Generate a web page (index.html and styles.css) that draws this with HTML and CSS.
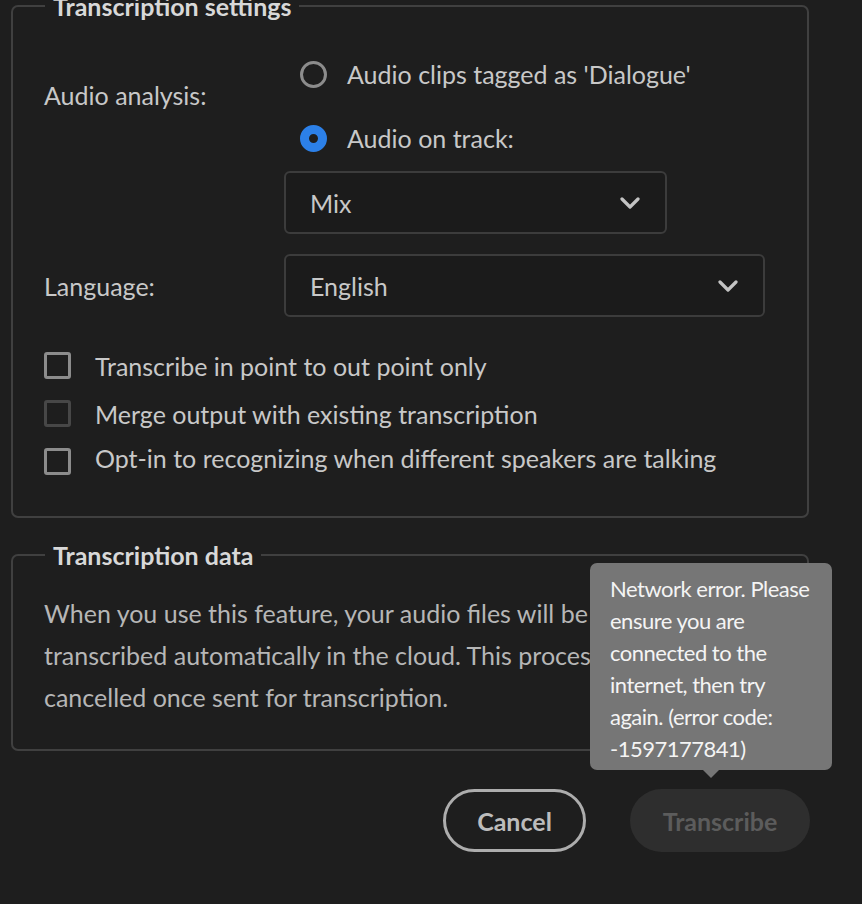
FILE: index.html
```html
<!DOCTYPE html>
<html lang="en">
<head>
<meta charset="utf-8">
<title>Transcription</title>
<link rel="stylesheet" href="styles.css">
</head>
<body>
<div class="dialog">
  <fieldset class="group settings">
    <legend>Transcription settings</legend>
    <div class="row analysis">
      <div class="label analysis-label">Audio analysis:</div>
      <div class="controls">
        <div class="radio"><span class="radio-mark"></span><span>Audio clips tagged as 'Dialogue'</span></div>
        <div class="radio checked"><span class="radio-mark"></span><span>Audio on track:</span></div>
        <div class="select select-mix"><span>Mix</span>
          <svg class="chev" width="20" height="12" viewBox="0 0 20 12"><path d="M2 2 L10 10 L18 2" fill="none" stroke="#c4c4c4" stroke-width="3.2" stroke-linecap="round" stroke-linejoin="round"/></svg>
        </div>
      </div>
    </div>
    <div class="row language">
      <div class="label">Language:</div>
      <div class="select select-lang"><span>English</span>
        <svg class="chev" width="20" height="12" viewBox="0 0 20 12"><path d="M2 2 L10 10 L18 2" fill="none" stroke="#c4c4c4" stroke-width="3.2" stroke-linecap="round" stroke-linejoin="round"/></svg>
      </div>
    </div>
    <div class="checks">
      <div class="check"><span class="box"></span><span>Transcribe in point to out point only</span></div>
      <div class="check disabled"><span class="box"></span><span>Merge output with existing transcription</span></div>
      <div class="check last"><span class="box"></span><span>Opt-in to recognizing when different speakers are talking</span></div>
    </div>
  </fieldset>

  <fieldset class="group data">
    <legend>Transcription data</legend>
    <p class="desc">
      <span class="line">When you use this feature, your audio files will be sent to Adobe and</span>
      <span class="line">transcribed automatically in the cloud. This process cannot be</span>
      <span class="line">cancelled once sent for transcription.</span>
    </p>
  </fieldset>

  <div class="actions">
    <button class="btn cancel">Cancel</button>
    <div class="transcribe-wrap">
      <button class="btn transcribe">Transcribe</button>
      <div class="tooltip"><span class="tl">Network error. Please</span> <span class="tl">ensure you are</span> <span class="tl">connected to the</span> <span class="tl">internet, then try</span> <span class="tl">again. (error code:</span> <span class="tl">-1597177841)</span></div>
    </div>
  </div>
</div>
</body>
</html>
```

FILE: styles.css
```css
html, body {
  margin: 0;
  padding: 0;
  background: #1e1e1e;
}
body {
  font-family: Lato, "Open Sans", sans-serif;
  color: #c8c8c8;
  font-size: 25px;
  width: 862px;
  height: 904px;
  overflow: hidden;
}
.dialog {
  padding: 0 0 0 11px;
  width: 798px;
}
.group {
  border: 2px solid #404040;
  border-radius: 7px;
  margin: 0;
  padding: 0 31px;
  min-width: 0;
}
.group legend {
  padding: 0 8px;
  margin-left: 1px;
  font-weight: 700;
  font-size: 25px;
  line-height: 26px;
  color: #d8d8d8;
}
.settings {
  margin-top: -7px;
  padding-bottom: 41px;
}
.row {
  display: flex;
}
.label {
  width: 240px;
  flex: none;
  line-height: 30px;
}
.analysis {
  padding-top: 35px;
}
.analysis-label {
  margin-top: 26px;
}
.controls {
  display: flex;
  flex-direction: column;
}
.radio {
  display: flex;
  align-items: center;
  height: 40px;
  padding-left: 16px;
  gap: 20px;
}
.radio + .radio {
  margin-top: 24px;
}
.radio-mark {
  width: 27px;
  height: 27px;
  box-sizing: border-box;
  border: 3px solid #8c8c8c;
  border-radius: 50%;
}
.radio.checked .radio-mark {
  border: 9.5px solid #2c80e8;
  background: #1e1e1e;
}
.select {
  display: flex;
  align-items: center;
  justify-content: space-between;
  box-sizing: border-box;
  height: 63px;
  border: 2px solid #3c3c3c;
  border-radius: 6px;
  background: #1b1b1b;
  padding: 0 25px 0 24px;
}
.select-mix {
  width: 383px;
  margin-top: 13px;
}
.select-lang {
  width: 481px;
}
.language {
  margin-top: 20px;
  align-items: center;
}
.checks {
  margin-top: 35px;
  display: flex;
  flex-direction: column;
  gap: 21px;
}
.check {
  display: flex;
  align-items: center;
  height: 27px;
  gap: 24px;
}
.check.last span:last-child {
  margin-top: -7px;
}
.box {
  width: 27px;
  height: 27px;
  box-sizing: border-box;
  border: 3px solid #8c8c8c;
  border-radius: 3px;
}
.check.disabled .box {
  border-color: #474747;
}
.data {
  margin-top: 24px;
  padding-bottom: 31px;
}
.desc {
  margin: 24px 0 0;
  line-height: 42px;
  color: #b6b6b6;
}
.desc .line {
  display: block;
  white-space: nowrap;
}
.actions {
  display: flex;
  justify-content: flex-end;
  gap: 44px;
  margin-top: 38px;
  margin-right: -1px;
}
.btn {
  font-family: Lato, "Open Sans", sans-serif;
  font-weight: 700;
  font-size: 25px;
  height: 63px;
  border-radius: 32px;
  box-sizing: border-box;
  padding: 0;
}
.cancel {
  width: 143px;
  background: transparent;
  border: 3px solid #adadad;
  color: #bcbcbc;
}
.transcribe-wrap {
  position: relative;
}
.transcribe {
  width: 180px;
  background: #2e2e2e;
  border: none;
  color: #5c5c5c;
}
.tooltip {
  position: absolute;
  right: -22px;
  bottom: 82px;
  width: 242px;
  box-sizing: border-box;
  padding: 10px 10px 5px 20px;
  background: #767676;
  color: #f4f4f4;
  border-radius: 7px;
  font-size: 22px;
  line-height: 32px;
  letter-spacing: -0.5px;
}
.tooltip .tl {
  display: block;
  white-space: nowrap;
}
.tooltip::after {
  content: "";
  position: absolute;
  left: 113px;
  bottom: -8px;
  border-left: 8px solid transparent;
  border-right: 8px solid transparent;
  border-top: 8px solid #767676;
}
```
